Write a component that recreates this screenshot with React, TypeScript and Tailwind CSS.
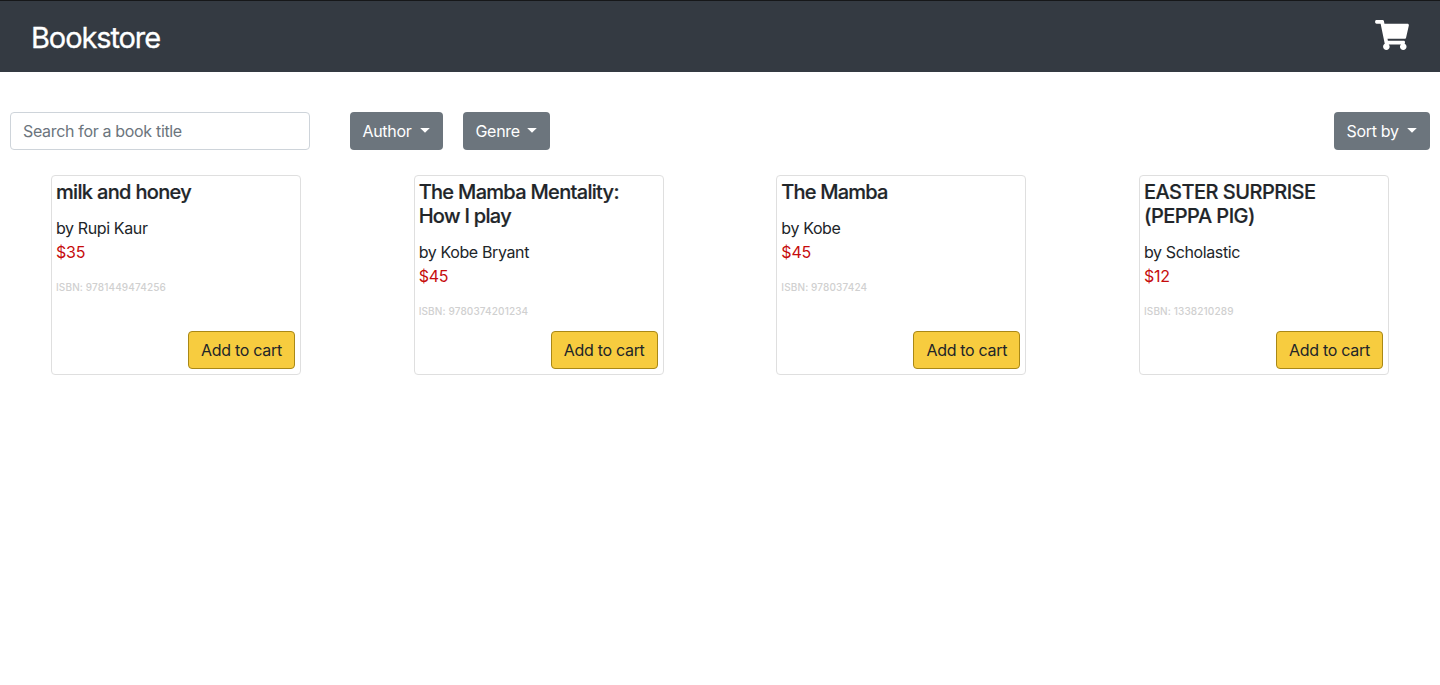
import { FaShoppingCart } from "react-icons/fa";

const books = [
  { title: "milk and honey", author: "Rupi Kaur", price: 35, isbn: "9781449474256", titleTracking: "tracking-[-0.67px]" },
  { title: "The Mamba Mentality: How I play", author: "Kobe Bryant", price: 45, isbn: "9780374201234", titleTracking: "tracking-[-0.69px]" },
  { title: "The Mamba", author: "Kobe", price: 45, isbn: "978037424", titleTracking: "tracking-[-0.8px]" },
  { title: "EASTER SURPRISE (PEPPA PIG)", author: "Scholastic", price: 12, isbn: "1338210289", titleTracking: "tracking-[-0.52px]" },
];

function Dropdown({ label, width }: { label: string; width: string }) {
  return (
    <button className={`${width} flex h-[38px] items-center justify-between rounded bg-[#6c757d] pr-[13px] pl-[12.5px] tracking-[-0.32px] text-white`}>
      <span>{label}</span>
      <svg className="mb-[2px] h-[5px] w-[10px] fill-white" viewBox="0 0 10 5" aria-hidden="true">
        <path d="M0.2 0H9.8L5 4.8z" />
      </svg>
    </button>
  );
}

export default function App() {
  return (
    <div className="min-h-[685px] bg-white font-['Inter',sans-serif] text-base leading-6 tracking-[-0.38px] text-[#212529]">
      <header className="flex h-[72px] items-center justify-between border-t border-[#161719] bg-[#343a42] pr-[31px] pl-[31px] text-white">
        <h1 className="pt-[2px] text-[29px] leading-8 tracking-[-1.1px] [-webkit-text-stroke:0.3px_white]">Bookstore</h1>
        <FaShoppingCart className="mb-1 h-[30px] w-[34px]" />
      </header>
      <div className="flex items-center px-2.5 pt-10">
        <input
          placeholder="Search for a book title"
          className="h-[38px] w-[300px] rounded border border-[#ced4da] px-3 tracking-[-0.33px] placeholder:text-[#6c757d]"
        />
        <div className="ml-10 flex gap-5">
          <Dropdown label="Author" width="w-[93px]" />
          <Dropdown label="Genre" width="w-[87px]" />
        </div>
        <div className="ml-auto">
          <Dropdown label="Sort by" width="w-24" />
        </div>
      </div>
      <main className="flex justify-between px-[51px] pt-[25px]">
        {books.map((book) => (
          <article key={book.isbn} className="flex h-[200px] w-[250px] flex-col rounded border border-[#dfdfdf] p-[5px] pt-1 pl-1">
            <h2 className={`${book.titleTracking} mb-3 text-xl leading-6 font-medium [-webkit-text-stroke:0.2px_#212529]`}>{book.title}</h2>
            <p>by {book.author}</p>
            <p className="tracking-[-0.2px] text-[#c60c0c]">${book.price}</p>
            <p className="mt-4 text-[10px] leading-[15px] font-medium tracking-[0.13px] text-[#d0d0d0]">ISBN: {book.isbn}</p>
            <button className="mt-auto h-[38px] w-[107px] self-end rounded border border-[#a98816] bg-[#f7cc3f] tracking-[-0.3px] whitespace-nowrap">
              Add to cart
            </button>
          </article>
        ))}
      </main>
    </div>
  );
}
